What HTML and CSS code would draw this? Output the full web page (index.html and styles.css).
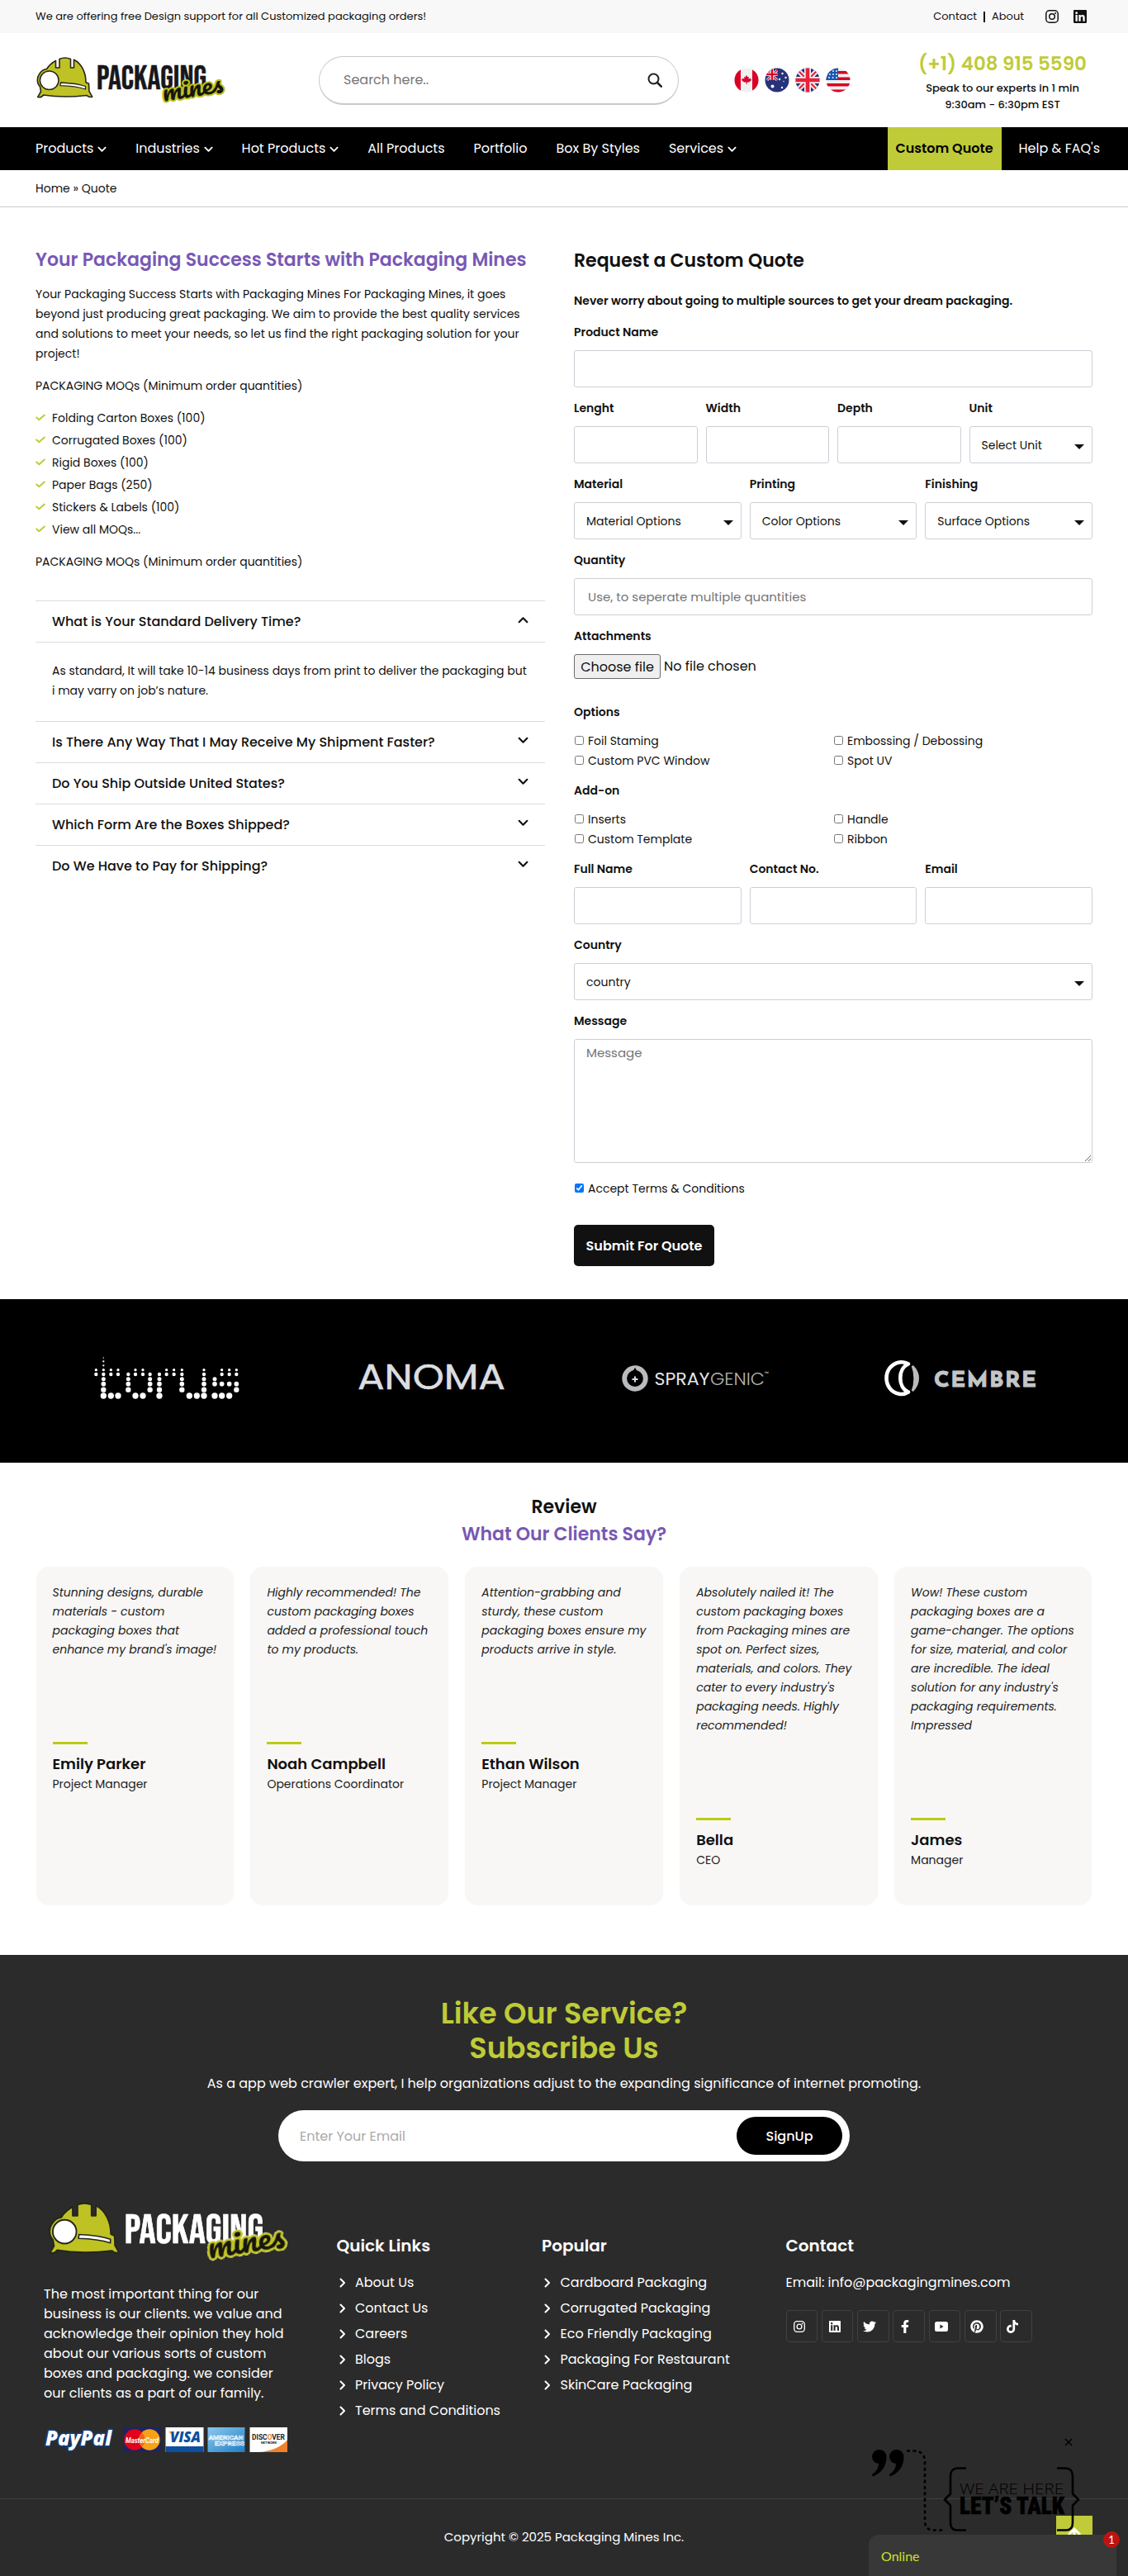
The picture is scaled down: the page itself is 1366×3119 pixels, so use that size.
FILE: index.html
```html
<!DOCTYPE html>
<html lang="en">
<head>
<meta charset="utf-8">
<title>Quote - Packaging Mines</title>
<link rel="stylesheet" href="styles.css">
</head>
<body>
<svg class="defs" aria-hidden="true">
  <symbol id="chev-down" viewBox="0 0 12 8"><path d="M1.5 1.5 6 6l4.500-4.500" fill="none" stroke="currentColor" stroke-width="2" stroke-linecap="round" stroke-linejoin="round"/></symbol>
  <symbol id="chev-right" viewBox="0 0 8 12"><path d="M1.500 1.500 6 6 1.500 10.500" fill="none" stroke="currentColor" stroke-width="2" stroke-linecap="round" stroke-linejoin="round"/></symbol>
  <symbol id="check" viewBox="0 0 12 9"><path d="M1.200 4.600 4.300 7.200 10.800 1.600" fill="none" stroke="currentColor" stroke-width="2" stroke-linecap="round" stroke-linejoin="round"/></symbol>
  <symbol id="instagram" viewBox="0 0 16 16"><rect x=".8" y=".8" width="14.400" height="14.400" rx="4" fill="none" stroke="currentColor" stroke-width="1.500"/><circle cx="8" cy="8" r="3.300" fill="none" stroke="currentColor" stroke-width="1.500"/><circle cx="12.100" cy="3.900" r="1" fill="currentColor"/></symbol>
  <symbol id="linkedin" viewBox="0 32 448 448"><path fill="currentColor" d="M416 32H31.900C14.300 32 0 46.500 0 64.300v383.400C0 465.500 14.300 480 31.900 480H416c17.600 0 32-14.500 32-32.300V64.300c0-17.800-14.400-32.300-32-32.300zM135.400 416H69V202.200h66.500V416zm-33.200-243c-21.300 0-38.500-17.300-38.500-38.500S80.900 96 102.200 96c21.200 0 38.500 17.300 38.500 38.500 0 21.300-17.200 38.500-38.500 38.500zm282.100 243h-66.400V312c0-24.800-.5-56.700-34.500-56.700-34.600 0-39.900 27-39.900 54.900V416h-66.400V202.200h63.700v29.200h.9c8.900-16.800 30.600-34.500 62.900-34.500 67.200 0 79.700 44.300 79.700 101.900V416z"/></symbol>
  <symbol id="twitter" viewBox="0 0 512 512"><path fill="currentColor" d="M459.370 151.716c.325 4.548.325 9.097.325 13.645 0 138.720-105.583 298.558-298.558 298.558-59.452 0-114.680-17.219-161.137-47.106 8.447.974 16.568 1.299 25.340 1.299 49.055 0 94.213-16.568 130.274-44.832-46.132-.975-84.792-31.188-98.112-72.772 6.498.974 12.995 1.624 19.818 1.624 9.421 0 18.843-1.300 27.614-3.573-48.081-9.747-84.143-51.980-84.143-102.985v-1.299c13.969 7.797 30.214 12.670 47.431 13.319-28.264-18.843-46.781-51.005-46.781-87.391 0-19.492 5.197-37.360 14.294-52.954 51.655 63.675 129.300 105.258 216.365 109.807-1.624-7.797-2.599-15.918-2.599-24.040 0-57.828 46.782-104.934 104.934-104.934 30.213 0 57.502 12.670 76.670 33.137 23.715-4.548 46.456-13.320 66.599-25.340-7.798 24.366-24.366 44.833-46.132 57.827 21.117-2.273 41.584-8.122 60.426-16.243-14.292 20.791-32.161 39.308-52.628 54.253z"/></symbol>
  <symbol id="facebook" viewBox="0 0 320 512"><path fill="currentColor" d="M279.140 288l14.220-92.660h-88.910v-60.130c0-25.350 12.420-50.060 52.240-50.060h40.420V6.260S260.430 0 225.360 0c-73.220 0-121.080 44.380-121.080 124.720v70.620H22.890V288h81.390v224h100.170V288z"/></symbol>
  <symbol id="youtube" viewBox="0 0 16 12"><path fill="currentColor" fill-rule="evenodd" d="M2.500 0h11A2.500 2.500 0 0 1 16 2.500v7a2.500 2.500 0 0 1-2.500 2.500h-11A2.500 2.500 0 0 1 0 9.500v-7A2.500 2.500 0 0 1 2.500 0zM6.400 3.500v5L10.600 6z"/></symbol>
  <symbol id="pinterest" viewBox="0 0 496 512"><path fill="currentColor" d="M496 256c0 137-111 248-248 248-25.600 0-50.200-3.900-73.400-11.100 10.100-16.500 25.200-43.500 30.800-65 3-11.600 15.400-59 15.400-59 8.100 15.400 31.700 28.500 56.800 28.500 74.800 0 128.700-68.800 128.700-154.300 0-81.900-66.900-143.200-152.900-143.200-107 0-163.900 71.800-163.900 150.100 0 36.400 19.400 81.700 50.300 96.100 4.700 2.200 7.200 1.200 8.300-3.300.8-3.400 5-20.300 6.900-28.100.6-2.500.3-4.700-1.700-7.100-10.100-12.500-18.300-35.300-18.300-56.600 0-54.700 41.400-107.600 112-107.600 60.900 0 103.600 41.500 103.600 100.900 0 67.100-33.900 113.600-78 113.600-24.300 0-42.600-20.100-36.700-44.800 7-29.500 20.500-61.300 20.500-82.600 0-19-10.200-34.900-31.400-34.900-24.900 0-44.900 25.700-44.900 60.200 0 22 7.400 36.800 7.400 36.800s-24.500 103.800-29 123.200c-5 21.400-3 51.600-.9 71.200C65.400 450.900 0 361.100 0 256 0 119 111 8 248 8s248 111 248 248z"/></symbol>
  <symbol id="tiktok" viewBox="0 0 448 512"><path fill="currentColor" d="M448 209.910a210.060 210.060 0 0 1-122.770-39.250V349.380A162.550 162.550 0 1 1 185 188.310V278.200a74.620 74.620 0 1 0 52.230 71.180V0l88 0a121.180 121.180 0 0 0 1.860 22.170h0A122.180 122.180 0 0 0 381 102.390a121.430 121.430 0 0 0 67 20.140Z"/></symbol>
  <symbol id="helmet" viewBox="0 0 70 52">
    <path d="M2.700 49.500 6.500 43 5.500 37C1.500 33 1.500 26 4.500 22 6.500 18 10 16 13.600 15.500 16 11.500 20 8 24.500 5.500V14H29V3.500C33 1.800 38.500 1.800 42.500 3.500V14h4V4.300C56 9 61 20 61 31.700l3.500 1.500.500 9.500 3.700 6.500C66 50 63.500 49 62 47.500 45 49.500 25 49.500 9.500 47 8 49.500 5 50 2.700 49.500z" fill="#bfc223" stroke="#26261a" stroke-width="1.600" stroke-linejoin="round"/>
    <circle cx="16.700" cy="29.300" r="11.300" fill="#fff" stroke="#26261a" stroke-width="1.500"/>
    <path d="M30.500 32C41 32.500 52 33.500 60.500 36.500V40C51 37 40.500 36 30 35.700z" fill="#fff" stroke="#26261a" stroke-width="1.300" stroke-linejoin="round"/>
  </symbol>
</svg>

<div class="topbar">
  <div class="wrap topbar-in">
    <span>We are offering free Design support for all Customized packaging orders!</span>
    <div class="top-links">
      <a>Contact</a><i class="bar"></i><a>About</a>
      <svg class="ti ti-first"><use href="#instagram"/></svg><svg class="ti"><use href="#linkedin"/></svg>
    </div>
  </div>
</div>

<header class="wrap header">
  <svg class="logo" viewBox="0 0 232 60">
    <use href="#helmet" width="70" height="52"/>
    <text class="lg-pack" x="74" y="40" textLength="133" lengthAdjust="spacingAndGlyphs">PACKAGING</text>
    <text class="lg-mines" transform="rotate(-9 155 55)" x="155" y="55" textLength="74" lengthAdjust="spacingAndGlyphs">mines</text>
  </svg>
  <form class="search">
    <input type="text" placeholder="Search here..">
    <svg viewBox="0 0 18 18"><circle cx="7.500" cy="7.500" r="6" fill="none" stroke="#222" stroke-width="2"/><path d="M12 12l4.700 4.700" stroke="#222" stroke-width="2.600" stroke-linecap="round"/></svg>
  </form>
  <div class="flags">
    <svg viewBox="0 0 30 30"><clipPath id="rd"><circle cx="15" cy="15" r="14.500"/></clipPath><g clip-path="url(#rd)"><path fill="#f0f0f0" d="M0 0h30v30H0z"/><path fill="#d80027" d="M0 0h8v30H0zM22 0h8v30h-8zM15 9l1.500 2.500 1.500-.5-.5 3 2-1.500.5 1.500 1.500.5-3.500 3h-2.500V20h-1v-2.500H12L8.500 14.500 10 14l.5-1.500 2 1.500-.5-3 1.500.5z"/></g></svg>
    <svg viewBox="0 0 30 30"><g clip-path="url(#rd)"><path fill="#26327a" d="M0 0h30v30H0z"/><path d="M0 0 15 15M15 3 3 15" stroke="#fff" stroke-width="3"/><path d="M2 2 15 15M15 3 3 15" stroke="#d80027" stroke-width="1.200"/><path d="M0 8h15.500M9 0v15" stroke="#fff" stroke-width="4"/><path d="M0 8h15.500M9 0v15" stroke="#d80027" stroke-width="2.400"/><g fill="#fff"><circle cx="9.500" cy="22.500" r="2"/><circle cx="21" cy="24" r="1.200"/><circle cx="21.500" cy="7" r="1.200"/><circle cx="25.500" cy="12" r="1.200"/><circle cx="18" cy="14" r="1.200"/><circle cx="23" cy="16.500" r=".7"/></g></g></svg>
    <svg viewBox="0 0 30 30"><g clip-path="url(#rd)"><path fill="#26327a" d="M0 0h30v30H0z"/><path d="M0 0 30 30M30 0 0 30" stroke="#f0f0f0" stroke-width="6"/><path d="M0 0 30 30M30 0 0 30" stroke="#e8223a" stroke-width="2.200"/><path d="M15 0v30M0 15h30" stroke="#f0f0f0" stroke-width="8"/><path d="M15 0v30M0 15h30" stroke="#e8223a" stroke-width="4.600"/></g></svg>
    <svg viewBox="0 0 30 30"><g clip-path="url(#rd)"><path fill="#f0f0f0" d="M0 0h30v30H0z"/><path fill="#d80027" d="M0 4h30v3.600H0zM0 11.500h30v3.600H0zM0 19h30v3.600H0zM0 26.500h30V30H0z"/><path fill="#1557b5" d="M0 0h15v15H0z"/><g fill="#f0f0f0"><circle cx="5" cy="8" r="1"/><circle cx="9" cy="8" r="1"/><circle cx="13" cy="8" r="1"/><circle cx="9" cy="4" r="1"/><circle cx="13" cy="4" r="1"/><circle cx="4" cy="12" r="1"/><circle cx="8.500" cy="12" r="1"/><circle cx="13" cy="12" r="1"/></g></g></svg>
  </div>
  <div class="phone">
    <strong>(+1) 408 915 5590</strong>
    <span>Speak to our experts in 1 min</span>
    <span>9:30am - 6:30pm EST</span>
  </div>
</header>

<nav class="nav">
  <div class="nav-in">
    <a>Products <svg><use href="#chev-down"/></svg></a>
    <a>Industries <svg><use href="#chev-down"/></svg></a>
    <a>Hot Products <svg><use href="#chev-down"/></svg></a>
    <a>All Products</a>
    <a>Portfolio</a>
    <a>Box By Styles</a>
    <a>Services <svg><use href="#chev-down"/></svg></a>
    <a class="cta">Custom Quote</a>
    <a class="help">Help &amp; FAQ's</a>
  </div>
</nav>

<div class="crumbs"><div class="wrap">Home » Quote</div></div>

<main class="wrap main">
  <section class="left">
    <h2>Your Packaging Success Starts with Packaging Mines</h2>
    <p>Your Packaging Success Starts with Packaging Mines For Packaging Mines, it goes beyond just producing great packaging. We aim to provide the best quality services and solutions to meet your needs, so let us find the right packaging solution for your project!</p>
    <p>PACKAGING MOQs (Minimum order quantities)</p>
    <ul class="moq">
      <li><svg><use href="#check"/></svg>Folding Carton Boxes (100)</li>
      <li><svg><use href="#check"/></svg>Corrugated Boxes (100)</li>
      <li><svg><use href="#check"/></svg>Rigid Boxes (100)</li>
      <li><svg><use href="#check"/></svg>Paper Bags (250)</li>
      <li><svg><use href="#check"/></svg>Stickers &amp; Labels (100)</li>
      <li><svg><use href="#check"/></svg>View all MOQs...</li>
    </ul>
    <p>PACKAGING MOQs (Minimum order quantities)</p>
    <div class="faq">
      <div class="q open">What is Your Standard Delivery Time?<svg><use href="#chev-down"/></svg></div>
      <div class="a">As standard, It will take 10-14 business days from print to deliver the packaging but i may varry on job’s nature.</div>
      <div class="q">Is There Any Way That I May Receive My Shipment Faster?<svg><use href="#chev-down"/></svg></div>
      <div class="q">Do You Ship Outside United States?<svg><use href="#chev-down"/></svg></div>
      <div class="q">Which Form Are the Boxes Shipped?<svg><use href="#chev-down"/></svg></div>
      <div class="q">Do We Have to Pay for Shipping?<svg><use href="#chev-down"/></svg></div>
    </div>
  </section>

  <form class="quote">
    <h1>Request a Custom Quote</h1>
    <p class="lead">Never worry about going to multiple sources to get your dream packaging.</p>
    <div class="row"><div class="f"><label>Product Name</label><input type="text"></div></div>
    <div class="row">
      <div class="f"><label>Lenght</label><input type="text"></div>
      <div class="f"><label>Width</label><input type="text"></div>
      <div class="f"><label>Depth</label><input type="text"></div>
      <div class="f"><label>Unit</label><div class="sel"><select><option>Select Unit</option></select></div></div>
    </div>
    <div class="row">
      <div class="f"><label>Material</label><div class="sel"><select><option>Material Options</option></select></div></div>
      <div class="f"><label>Printing</label><div class="sel"><select><option>Color Options</option></select></div></div>
      <div class="f"><label>Finishing</label><div class="sel"><select><option>Surface Options</option></select></div></div>
    </div>
    <div class="row"><div class="f"><label>Quantity</label><input type="text" placeholder="Use, to seperate multiple quantities"></div></div>
    <div class="row"><div class="f"><label>Attachments</label><div class="file"><button type="button">Choose file</button><span>No file chosen</span></div></div></div>
    <div class="checks">
      <b>Options</b>
      <label><input type="checkbox">Foil Staming</label><label><input type="checkbox">Embossing / Debossing</label>
      <label><input type="checkbox">Custom PVC Window</label><label><input type="checkbox">Spot UV</label>
    </div>
    <div class="checks">
      <b>Add-on</b>
      <label><input type="checkbox">Inserts</label><label><input type="checkbox">Handle</label>
      <label><input type="checkbox">Custom Template</label><label><input type="checkbox">Ribbon</label>
    </div>
    <div class="row">
      <div class="f"><label>Full Name</label><input type="text"></div>
      <div class="f"><label>Contact No.</label><input type="text"></div>
      <div class="f"><label>Email</label><input type="text"></div>
    </div>
    <div class="row"><div class="f"><label>Country</label><div class="sel"><select><option>country</option></select></div></div></div>
    <div class="f"><label>Message</label><textarea placeholder="Message"></textarea></div>
    <label class="accept"><input type="checkbox" checked>Accept Terms &amp; Conditions</label>
    <button class="submit" type="button">Submit For Quote</button>
  </form>
</main>

<section class="brands">
  <svg class="brand-svg" viewBox="0 0 1366 198">
    <g transform="translate(105 62) scale(.33333)" fill="none" stroke="#fff" stroke-linecap="round">
      <path stroke-width="4" d="M61 27h.01"/>
      <path stroke-width="7" d="M61 40h.01M61 55h.01"/>
      <path stroke-width="10" d="M34 71h.01M61 71h.01M88 71h.01M114 71h.01M177 71h.01M204 71h.01M290 71h.01M317 71h.01M346 71h.01M426 71h.01M491 71h.01M518 71h.01M544 71h.01"/>
      <path stroke-width="13" d="M34 87h.01M61 87h.01M88 87h.01M114 87h.01M151 87h.01M177 87h.01M204 87h.01M230 87h.01M264 87h.01M290 87h.01M317 87h.01M346 87h.01M426 87h.01M491 87h.01M518 87h.01M544 87h.01"/>
      <path stroke-width="15" d="M61 104h.01M151 104h.01M230 104h.01M264 104h.01M346 104h.01M426 104h.01M465 104h.01"/>
      <path stroke-width="17" d="M61 122h.01M151 122h.01M230 122h.01M264 122h.01M346 122h.01M426 122h.01M465 122h.01M491 122h.01M518 122h.01M544 122h.01"/>
      <path stroke-width="19" d="M61 143h.01M151 143h.01M230 143h.01M264 143h.01M346 143h.01M426 143h.01M544 143h.01"/>
      <path stroke-width="22" d="M61 165h.01M88 165h.01M114 165h.01M177 165h.01M204 165h.01M264 165h.01M373 165h.01M400 165h.01M426 165h.01M465 165h.01M491 165h.01M518 165h.01"/>
    </g>
    <text class="b-anoma" x="433" y="109" textLength="179" lengthAdjust="spacingAndGlyphs">ANOMA</text>
    <circle cx="769" cy="96" r="12.800" fill="none" stroke="#b9bbbd" stroke-width="5.800"/>
    <path d="M769 83c3.500 6 6.500 9 6.500 14a6.500 6.500 0 0 1-13 0c0-5 3-8 6.500-14z" fill="#000"/>
    <path d="M769 93.500v7M765.500 97h7" stroke="#ddd" stroke-width="2"/>
    <text class="b-spray" x="792.500" y="104" textLength="67" lengthAdjust="spacingAndGlyphs">SPRAY</text>
    <text class="b-genic" x="860" y="104" textLength="66" lengthAdjust="spacingAndGlyphs">GENIC</text>
    <text class="b-tm" x="926" y="92">™</text>
    <path d="M1100 78.500C1096 76 1092 76 1089 76.500 1079 78.500 1073.500 86.500 1073.500 95.500S1079 113 1089 114.800C1092 115.300 1096 115 1100 112.500 1087 107 1087 84 1100 78.500z" fill="none" stroke="#fff" stroke-width="4.600" stroke-linejoin="round"/>
    <path d="M1105 81c9 9 9 21 0 30 3.500-9 3.500-21 0-30z" fill="#b9bbbd" stroke="#b9bbbd" stroke-width="2.500"/>
    <text class="b-cembre" x="1131" y="106" textLength="124" lengthAdjust="spacing">CEMBRE</text>
  </svg>
</section>

<section class="reviews">
  <h2>Review</h2>
  <h3>What Our Clients Say?</h3>
  <div class="cards wrap">
    <article><p>Stunning designs, durable materials - custom packaging boxes that enhance my brand's image!</p><i></i><b>Emily Parker</b><span>Project Manager</span></article>
    <article><p>Highly recommended! The custom packaging boxes added a professional touch to my products.</p><i></i><b>Noah Campbell</b><span>Operations Coordinator</span></article>
    <article><p>Attention-grabbing and sturdy, these custom packaging boxes ensure my products arrive in style.</p><i></i><b>Ethan Wilson</b><span>Project Manager</span></article>
    <article><p>Absolutely nailed it! The custom packaging boxes from Packaging mines are spot on. Perfect sizes, materials, and colors. They cater to every industry's packaging needs. Highly recommended!</p><i></i><b>Bella</b><span>CEO</span></article>
    <article><p>Wow! These custom packaging boxes are a game-changer. The options for size, material, and color are incredible. The ideal solution for any industry's packaging requirements. Impressed</p><i></i><b>James</b><span>Manager</span></article>
  </div>
</section>

<footer class="footer">
  <div class="subscribe">
    <h2>Like Our Service?<br>Subscribe Us</h2>
    <p>As a app web crawler expert, I help organizations adjust to the expanding significance of internet promoting.</p>
    <form class="pill"><input type="text" placeholder="Enter Your Email"><button type="button">SignUp</button></form>
  </div>
  <div class="cols">
    <div class="about">
      <svg class="logo-f" viewBox="0 0 232 60">
        <use href="#helmet" width="70" height="52"/>
        <text class="lg-pack light" x="74" y="40" textLength="133" lengthAdjust="spacingAndGlyphs">PACKAGING</text>
        <g transform="rotate(-9 155 55)"><text class="lg-mines halo" x="155" y="55" textLength="74" lengthAdjust="spacingAndGlyphs">mines</text></g>
      </svg>
      <p>The most important thing for our business is our clients. we value and acknowledge their opinion they hold about our various sorts of custom boxes and packaging. we consider our clients as a part of our family.</p>
      <svg class="pay" viewBox="0 0 296 32">
        <text class="p-pal" x="2" y="23" textLength="80" lengthAdjust="spacingAndGlyphs">PayPal</text>
        <rect x="96.500" y="1" width="45" height="30" fill="#1d2460"/><circle cx="110" cy="16" r="12.700" fill="#e2001a"/><circle cx="128" cy="16" r="12.700" fill="#f9a01b"/><path d="M119 7.500a12.700 12.700 0 0 1 0 17 12.700 12.700 0 0 1 0-17z" fill="#f0601a"/><text class="p-mc" x="99" y="19.500" textLength="40" lengthAdjust="spacingAndGlyphs">MasterCard</text>
        <rect x="147.500" y="1" width="46" height="30" fill="#fff"/><path d="M147.500 24h46v7h-46z" fill="#0b4f9e"/><path d="M151 6h5l3 8z" fill="#f2a22c"/><text class="p-visa" x="153" y="19" textLength="37" lengthAdjust="spacingAndGlyphs">VISA</text>
        <linearGradient id="ax" x1="0" x2="1" y1="0" y2="1"><stop offset="0" stop-color="#8cc8ec"/><stop offset="1" stop-color="#1e7fc6"/></linearGradient>
        <rect x="198.500" y="1" width="45" height="30" fill="url(#ax)"/><text class="p-ax" x="199.500" y="16" textLength="42" lengthAdjust="spacingAndGlyphs">AMERICAN</text><text class="p-ax" x="207" y="23" textLength="36" lengthAdjust="spacingAndGlyphs">EXPRESS</text>
        <rect x="249.500" y="1" width="45.500" height="30" fill="#fff"/><path d="M295 16v15h-34c14-1 28-7 34-15z" fill="#f0812c"/><text class="p-disc" x="252" y="15.500" textLength="40" lengthAdjust="spacingAndGlyphs">DISC<tspan fill="#f0812c">O</tspan>VER</text><text class="p-net" x="263" y="20.500" textLength="19" lengthAdjust="spacingAndGlyphs">NETWORK</text>
      </svg>
    </div>
    <div class="col">
      <h4>Quick Links</h4>
      <ul>
        <li><svg><use href="#chev-right"/></svg>About Us</li><li><svg><use href="#chev-right"/></svg>Contact Us</li><li><svg><use href="#chev-right"/></svg>Careers</li><li><svg><use href="#chev-right"/></svg>Blogs</li><li><svg><use href="#chev-right"/></svg>Privacy Policy</li><li><svg><use href="#chev-right"/></svg>Terms and Conditions</li>
      </ul>
    </div>
    <div class="col">
      <h4>Popular</h4>
      <ul>
        <li><svg><use href="#chev-right"/></svg>Cardboard Packaging</li><li><svg><use href="#chev-right"/></svg>Corrugated Packaging</li><li><svg><use href="#chev-right"/></svg>Eco Friendly Packaging</li><li><svg><use href="#chev-right"/></svg>Packaging For Restaurant</li><li><svg><use href="#chev-right"/></svg>SkinCare Packaging</li>
      </ul>
    </div>
    <div class="col">
      <h4>Contact</h4>
      <div class="mail">Email: info@packagingmines.com</div>
      <div class="social">
        <a><svg><use href="#instagram"/></svg></a><a><svg><use href="#linkedin"/></svg></a><a><svg class="s16"><use href="#twitter"/></svg></a><a><svg class="s16"><use href="#facebook"/></svg></a><a><svg class="s16 yt"><use href="#youtube"/></svg></a><a><svg class="s16"><use href="#pinterest"/></svg></a><a><svg class="s16"><use href="#tiktok"/></svg></a>
      </div>
    </div>
  </div>
  <div class="copy">Copyright © 2025 Packaging Mines Inc.</div>

  <div class="to-top"><svg viewBox="0 0 20 20"><path d="M10 19V3M3 10l7-7 7 7" fill="none" stroke="#fff" stroke-width="3"/></svg></div>
  <svg class="talk" viewBox="0 0 260 117">
    <path d="M239 5l8 8M247 5l-8 8" stroke="#000" stroke-width="1.500"/>
    <g id="quote-mark"><path d="M-24 0a8.500 8.500 0 0 1 8.500 9.500C-15.500 20-22 29-32.500 32.500L-33 30c5-3 8-8 8-13a8.500 8.500 0 0 1 1-17z" transform="translate(38 18)"/></g>
    <use href="#quote-mark" x="21"/>
    <path d="M47 19.500h8c9 0 14 4 14 13V104c0 8 4 11.500 10 11.500h12" fill="none" stroke="#000" stroke-width="2.600" stroke-dasharray="4 3.400"/>
    <path d="M119 40.500h-10c-6 0-9 4-9 9V71.500l-7 7 7 7v21c0 6 3 9 8 9h11M229 40.500h10c6 0 9 4 9 9V71.500l7 7-7 7v21c0 6-3 9-8 9h-11" fill="none" stroke="#000" stroke-width="2.600"/>
    <text class="t-we" x="111" y="72" textLength="126" lengthAdjust="spacingAndGlyphs">WE ARE HERE</text>
    <text class="t-lets" x="111" y="96" textLength="127" lengthAdjust="spacingAndGlyphs">LET’S TALK</text>
  </svg>
  <div class="online">Online<span>1</span></div>
</footer>
</body>
</html>
```
FILE: styles.css
```css
* { box-sizing: border-box; }
body { margin: 0; background: #fff; color: #111; font: 400 14px/24px Poppins, Inter, sans-serif; }
h1, h2, h3, h4, p, ul { margin: 0; padding: 0; }
ul { list-style: none; }
input, select, textarea, button { font-family: inherit; color: #111; }
.defs { position: absolute; width: 0; height: 0; }
.wrap { width: 1280px; margin: 0 auto; }

.topbar { height: 40px; background: #f8f8f8; font-size: 13px; }
.topbar-in { display: flex; justify-content: space-between; align-items: center; height: 40px; }
.top-links { display: flex; align-items: center; padding-right: 7px; }
.bar { width: 2px; height: 13px; background: #111; margin: 0 8px 0 8px; }
.ti { width: 16px; height: 16px; margin-left: 18px; }
.ti-first { margin-left: 26px; }

.header { display: flex; align-items: center; height: 114px; }
.logo { width: 232px; height: 60px; margin-top: 1px; overflow: visible; }
.lg-pack { font: 400 40px "Bebas Neue", "Oswald", "Roboto Condensed", Roboto, sans-serif; fill: #17171a; stroke: #17171a; stroke-width: .5; }
.lg-pack.light { fill: #fff; stroke: #fff; }
.lg-mines { font: 400 30px "Pacifico", "Kaushan Script", "Lobster", "DejaVu Serif", serif; fill: #17170c; stroke: #bfc223; stroke-width: 4; paint-order: stroke; stroke-linejoin: round; }
.halo { filter: drop-shadow(0 0 .6px #fff) drop-shadow(0 0 .4px #fff); }
.search { display: flex; align-items: center; width: 436px; height: 59px; margin-left: 111px; padding: 0 19px 0 29px; border: 1px solid #c9c9c9; border-bottom-width: 2px; border-radius: 30px; }
.search input { flex: 1; border: 0; outline: 0; padding: 0; background: none; font-size: 16px; }
.search input::placeholder { color: #777; }
.search svg { width: 18px; height: 18px; }
.flags { display: flex; gap: 7px; margin-left: 67px; }
.flags svg { width: 30px; height: 30px; }
.phone { display: flex; flex-direction: column; align-items: center; width: 206px; margin-left: 81px; font-weight: 500; font-size: 13px; line-height: 20px; white-space: nowrap; }
.phone strong { font-weight: 600; font-size: 23px; line-height: 32px; margin: 3px 0 4px; color: #bfcb38; }

.nav { height: 52px; background: #000; }
.nav-in { display: flex; align-items: center; gap: 35px; padding-left: 43px; height: 52px; color: #fff; font-size: 16px; white-space: nowrap; }
.nav-in svg { width: 11px; height: 8px; margin-left: .5px; }
.cta { margin-left: auto; height: 52px; width: 138px; text-align: center; line-height: 52px; background: #bfcb38; color: #000; font-weight: 600; }
.help { margin: 0 34px 0 -14px; }
.crumbs { height: 45px; line-height: 44px; border-bottom: 1px solid #ccc; }

.main { display: grid; grid-template-columns: 617px 628px; gap: 35px; height: 1322px; padding-top: 48px; }
.left h2 { font-weight: 600; font-size: 22px; line-height: 32px; color: #7858b4; white-space: nowrap; }
.left p { margin-top: 15px; padding-right: 20px; }
.left h2 + p { margin-top: 13px; }
.moq { margin: 13px 0 -1px; }
.moq li { display: flex; align-items: center; gap: 8px; height: 27px; }
.moq svg { width: 12px; height: 9px; color: #bfcb38; }
.faq { margin-top: 35px; }
.q { display: flex; justify-content: space-between; align-items: center; height: 50px; padding: 0 20px; border-top: 1px solid #d9dcde; font-weight: 500; font-size: 16px; }
.q svg { width: 13px; height: 9px; margin-bottom: 4px; }
.q.open { border-bottom: 1px solid #d9dcde; height: 51px; }
.q.open svg { transform: rotate(180deg); }
.a { padding: 22px 20px 25px; }

.quote h1 { font-weight: 600; font-size: 22px; line-height: 34px; }
.lead { margin: 19px 0 14px; font-weight: 600; }
.row { display: flex; gap: 10px; height: 92px; }
.f { flex: 1; display: flex; flex-direction: column; }
.f > label, .checks b { font-weight: 600; margin-bottom: 10px; line-height: 24px; }
.f > input, .f select, textarea { width: 100%; height: 45px; border: 1px solid #cbd0d6; border-radius: 3px; background: #fff; outline: 0; }
.f > input { padding: 0 16px; font-size: 15px; }
.f select { padding: 0 14px; font-size: 14px; appearance: none; }
.sel { position: relative; }
.sel::after { content: ""; position: absolute; right: 10px; top: 22px; border: 6px solid transparent; border-top-color: #111; border-bottom: 0; }
::placeholder { color: #757575; }
.file { display: flex; align-items: center; gap: 4px; font-size: 16px; }
.file button { width: 105px; height: 30px; padding: 0; font-size: 16px; background: #efefef; border: 1px solid #6b6b6b; border-radius: 3px; }
.checks { display: grid; grid-template-columns: 1fr 1fr; line-height: 24px; margin-bottom: 12px; }
.checks b { grid-column: span 2; height: 25px; }
.checks label, .accept { display: flex; align-items: center; gap: 5px; }
input[type=checkbox] { width: 11px; height: 11px; margin: 0 0 2px 1px; }
textarea { height: 150px; padding: 4px 14px; font-size: 15px; line-height: 24px; display: block; }
.f > textarea { height: 150px; }
.accept { margin: 19px 0 32px; }
.submit { width: 170px; height: 50px; padding: 0; border: 0; border-radius: 5px; background: #111; color: #fff; font-weight: 600; font-size: 16px; }

.brands { height: 198px; background: #000; }
.brand-svg { display: block; width: 1366px; height: 198px; }
.b-anoma { font: 400 42px Poppins, sans-serif; fill: #dcdee0; stroke: #dcdee0; stroke-width: .5; }
.b-spray { font: 400 22px Poppins, sans-serif; fill: #e6e6e6; }
.b-genic { font: 300 22px Poppins, sans-serif; fill: #b4b4b4; }
.b-tm { font: 400 6px Poppins, sans-serif; fill: #ccc; }
.b-cembre { font: 700 27px "Josefin Sans", Lato, sans-serif; fill: #c3c5c8; stroke: #c3c5c8; stroke-width: 1; }

.reviews { height: 596px; padding-top: 37px; text-align: center; }
.reviews h2, .reviews h3 { font-weight: 600; font-size: 22px; line-height: 33px; }
.reviews h3 { color: #7858b4; }
.cards { display: grid; grid-template-columns: repeat(5, 1fr); gap: 20.5px; padding: 0 .5px; margin-top: 23px; text-align: left; }
.cards article { display: flex; flex-direction: column; height: 410px; padding: 20px 17px 0 20px; border-radius: 15px; background: #f8f7f6; color: #222; }
.cards p { font-style: italic; line-height: 23px; margin-bottom: 100px; }
.cards i { width: 42px; height: 3px; background: #bccb12; }
.cards b { margin-top: 11px; font-weight: 600; font-size: 18px; line-height: 26px; color: #111; }
.cards span { line-height: 22px; }

.footer { position: relative; height: 752px; padding-top: 50px; background: #2b2b2b; color: #fff; font-size: 16px; overflow: hidden; }
.subscribe { text-align: center; }
.subscribe h2 { font-weight: 600; font-size: 35px; line-height: 42px; color: #bfcb38; }
.subscribe p { margin-top: 10px; }
.pill { display: flex; align-items: center; width: 692px; height: 62px; margin: 20px auto 0; padding: 0 9px 0 26px; background: #fff; border-radius: 31px; }
.pill input { flex: 1; border: 0; outline: 0; padding: 0; font-size: 16px; }
.pill input::placeholder { color: #aaa; }
.pill button { width: 128px; height: 46px; border: 0; border-radius: 23px; background: #000; color: #fff; font-weight: 500; font-size: 16px; }
.cols { display: grid; grid-template-columns: 354.5px 248.5px 295.5px 1fr; height: 409px; padding-left: 53px; border-bottom: 1px solid #414141; }
.about { padding-top: 48px; }
.logo-f { display: block; width: 296px; height: 76px; margin-left: 3px; overflow: visible; }
.about p { width: 300px; margin-top: 25px; }
.pay { display: block; width: 296px; height: 32px; margin-top: 28px; overflow: visible; }
.p-pal { font: italic 800 25px "Open Sans", sans-serif; fill: #fff; stroke: #143f7a; stroke-width: 3; paint-order: stroke; }
.p-mc { font: italic 700 9px Roboto, sans-serif; fill: #fff; }
.p-visa { font: italic 800 18px "Open Sans", sans-serif; fill: #0b4f9e; }
.p-ax { font: 700 7px Roboto, sans-serif; fill: none; stroke: #fff; stroke-width: .5; }
.p-disc { font: 700 9px Roboto, sans-serif; fill: #222; }
.p-net { font: 700 4px Roboto, sans-serif; fill: #222; }
.col { padding-top: 87px; }
.col h4 { font-weight: 600; font-size: 20px; line-height: 30px; margin-bottom: 14px; }
.col li { display: flex; align-items: center; height: 31px; padding-left: 3px; }
.col li svg { width: 8px; height: 12px; margin-right: 11.5px; }
.mail { line-height: 31px; }
.social { display: flex; gap: 4.600px; margin-top: 18px; }
.social a { display: flex; align-items: center; width: 38.700px; height: 39px; padding-left: 8px; border: 1px solid #414141; border-radius: 4px; }
.social svg { width: 14px; height: 14px; }
.social .s16 { width: 16px; height: 16px; margin-left: -2px; }
.social .yt { height: 12px; }
.copy { padding-top: 34px; text-align: center; font-size: 15px; }
.to-top { position: absolute; left: 1279px; top: 679px; width: 44px; height: 44px; background: #bfcb38; }
.to-top svg { width: 20px; height: 20px; margin: 13px 12px; display: block; }
.talk { position: absolute; left: 1051px; top: 581px; width: 260px; height: 117px; }
.t-we { font: 300 18px "Open Sans", sans-serif; }
.t-lets { font: 900 29px "Roboto Condensed", Roboto, sans-serif; stroke: #000; stroke-width: .6; }
.online { position: absolute; left: 1052px; top: 702px; width: 300px; height: 50px; padding-left: 15px; line-height: 51px; border-radius: 12px 12px 0 0; background: #383838; color: #cfe02b; font-family: Lato, sans-serif; }
.online span { position: absolute; left: 284px; top: -4px; width: 20px; height: 20px; border-radius: 50%; background: #bd1313; color: #fff; font-size: 13px; line-height: 20px; text-align: center; }
```
